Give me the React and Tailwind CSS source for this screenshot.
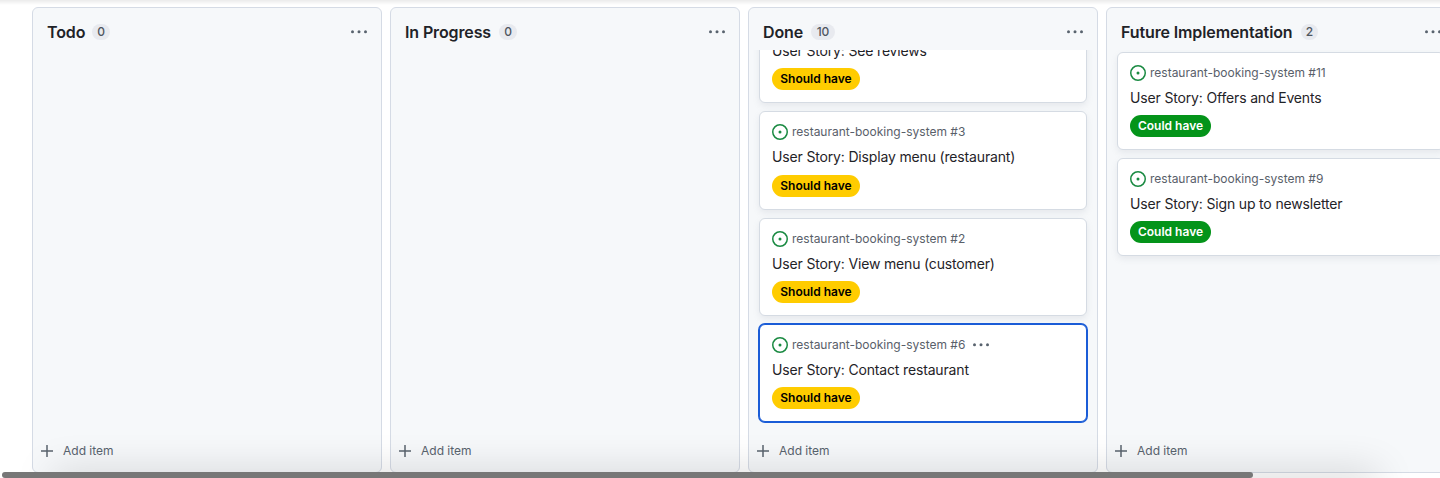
const should = { text: 'Should have', tone: 'w-[88px] bg-[#ffcc00] text-black' };
const could = { text: 'Could have', tone: 'w-[81px] bg-[#04941a] text-white' };

const columns = [
  { name: 'Todo', nameWidth: 'w-[37px]', count: '0', countWidth: 'w-[18px]', cards: [] },
  { name: 'In Progress', nameWidth: 'w-[86px]', count: '0', countWidth: 'w-[18px]', cards: [] },
  {
    name: 'Done', nameWidth: 'w-[40px]', count: '10', countWidth: 'w-[24px]', scrolled: true,
    cards: [
      { title: 'User Story: See reviews', label: should },
      { id: '#3', title: 'User Story: Display menu (restaurant)', label: should },
      { id: '#2', title: 'User Story: View menu (customer)', label: should },
      { id: '#6', title: 'User Story: Contact restaurant', label: should, selected: true },
    ],
  },
  {
    name: 'Future Implementation', nameWidth: 'w-[172px]', count: '2', countWidth: 'w-[17px]',
    cards: [
      { id: '#11', title: 'User Story: Offers and Events', label: could },
      { id: '#9', title: 'User Story: Sign up to newsletter', label: could },
    ],
  },
];

function Dots() {
  return (
    <svg className="h-4 w-[18px] shrink-0 fill-[#59636e]" viewBox="0 0 18 16">
      <circle cx="2.5" cy="7.7" r="1.5" />
      <circle cx="9" cy="7.7" r="1.5" />
      <circle cx="15.5" cy="7.7" r="1.5" />
    </svg>
  );
}

function Card({ card }) {
  return (
    <article
      className={
        'h-[98.3px] shrink-0 rounded-md border bg-white px-3 pt-3 ' +
        (card.selected
          ? 'border-[#1a5cd7] shadow-[0_0_0_1px_#1a5cd7]'
          : 'border-[#d5dbe3] shadow-[0_3px_6px_rgba(140,149,159,0.15)]')
      }
    >
      <div className="flex h-4 items-center">
        {card.id && (
          <>
            <svg className="mr-1 h-4 w-4 shrink-0 fill-[#1a8a42]" viewBox="0 0 16 16">
              <path d="M8 9.5a1.5 1.5 0 1 0 0-3 1.5 1.5 0 0 0 0 3Z" />
              <path d="M8 0a8 8 0 1 1 0 16A8 8 0 0 1 8 0ZM1.5 8a6.5 6.5 0 1 0 13 0 6.5 6.5 0 0 0-13 0Z" />
            </svg>
            <span className="mr-[7px] whitespace-nowrap text-xs text-[#59606a]">
              restaurant-booking-system {card.id}
            </span>
          </>
        )}
        {card.selected && <Dots />}
      </div>
      <h3 className="mt-[6.1px] h-[21px] whitespace-nowrap text-sm leading-[21px] tracking-[-0.16px] text-[#1f2328]">
        {card.title}
      </h3>
      <span
        className={
          'mt-[7.2px] flex h-[22px] items-center justify-center whitespace-nowrap rounded-full text-xs font-semibold ' +
          card.label.tone
        }
      >
        {card.label.text}
      </span>
    </article>
  );
}

function Column({ column }) {
  return (
    <section className="flex h-[466px] w-[350px] shrink-0 flex-col rounded-md border border-[#d5dbe5] bg-[#f6f8fa]">
      <header className="flex h-[42px] shrink-0 items-center pl-[14px] pr-[13px] pt-1.5">
        <h2 className={'whitespace-nowrap text-base font-semibold tracking-[-0.12px] text-[#1f2328] ' + column.nameWidth}>
          {column.name}
        </h2>
        <span
          className={
            'ml-2 flex h-4 items-center justify-center rounded-full bg-[#e8eaef] text-xs font-medium text-[#4f5660] ' +
            column.countWidth
          }
        >
          {column.count}
        </span>
        <span className="ml-auto flex">
          <Dots />
        </span>
      </header>
      <div className="flex min-h-0 grow flex-col overflow-hidden px-2.5">
        <div className={'flex flex-col gap-2 ' + (column.scrolled ? '-mt-[45px]' : 'mt-[1.7px]')}>
          {column.cards.map((card) => (
            <Card key={card.title} card={card} />
          ))}
        </div>
      </div>
      <footer className="flex h-11 shrink-0 items-center pl-2 pt-[2px] text-xs text-[#59636e]">
        <svg className="mr-[10px] h-3 w-3 stroke-[#59636e]" viewBox="0 0 12 12" fill="none" strokeWidth="1.5">
          <path d="M6 0.4v11.2M0.4 6h11.2" strokeLinecap="round" />
        </svg>
        <span>Add item</span>
      </footer>
    </section>
  );
}

export default function App() {
  return (
    <main className="relative h-[478px] w-full overflow-hidden bg-white pl-8 pt-[7px] font-['Inter','Liberation_Sans',sans-serif]">
      <div className="flex gap-2">
        {columns.map((column) => (
          <Column key={column.name} column={column} />
        ))}
      </div>
      <div className="pointer-events-none absolute inset-x-0 top-0 h-[5px] bg-linear-to-b from-black/8 to-transparent" />
      <div className="pointer-events-none absolute -bottom-[10px] left-[60px] h-2 w-[1310px] shadow-[0_0_38px_8px_rgba(0,0,0,0.17)]" />
      <div className="absolute bottom-0 left-[2px] h-[6px] w-[1251px] rounded-[3px] bg-[#777777]" />
    </main>
  );
}
